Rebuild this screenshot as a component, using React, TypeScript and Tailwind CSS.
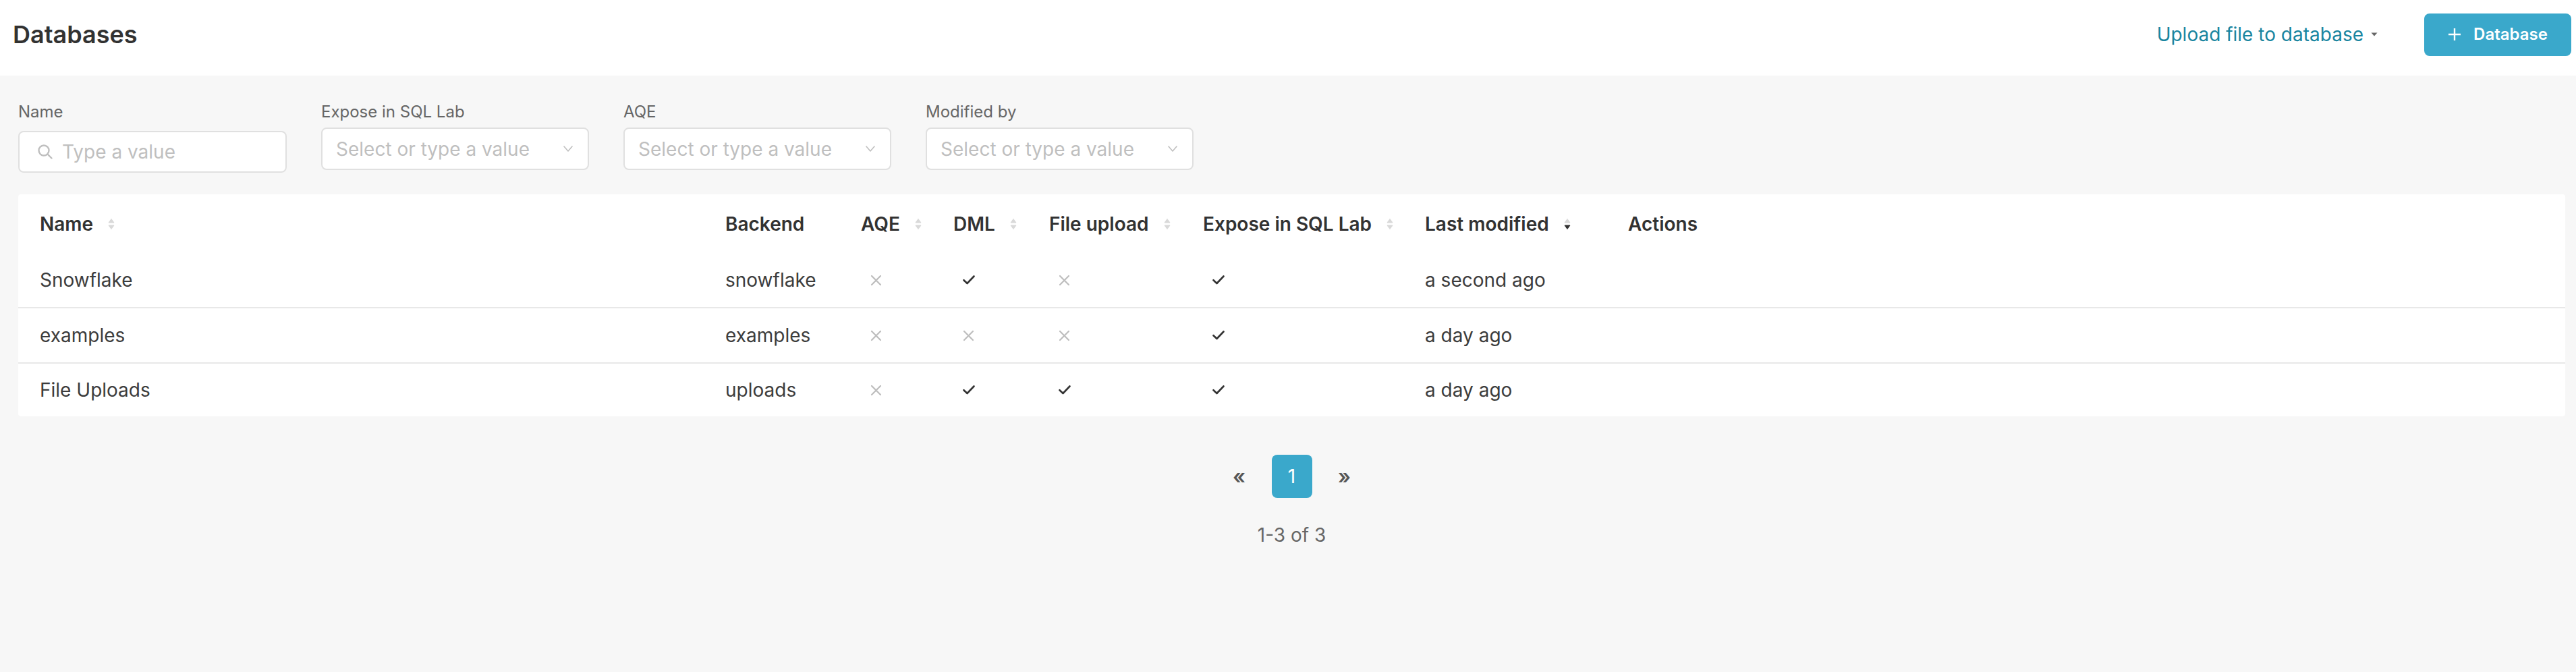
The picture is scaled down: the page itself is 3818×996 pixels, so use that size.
import React from "react";

type Flag = boolean;

interface DbRow {
  name: string;
  backend: string;
  aqe: Flag;
  dml: Flag;
  upload: Flag;
  expose: Flag;
  modified: string;
}

const rows: DbRow[] = [
  { name: "Snowflake", backend: "snowflake", aqe: false, dml: true, upload: false, expose: true, modified: "a second ago" },
  { name: "examples", backend: "examples", aqe: false, dml: false, upload: false, expose: true, modified: "a day ago" },
  { name: "File Uploads", backend: "uploads", aqe: false, dml: true, upload: true, expose: true, modified: "a day ago" }
];

const cols = "grid grid-cols-[1016px_201px_137px_142px_228px_329px_301px_1fr] items-center px-[32px]";

function SortIcon({ active }: { active?: boolean }) {
  return (
    <svg width="10" height="20" viewBox="0 0 10 20" className="ml-[22px] shrink-0">
      <path d="M5 2.5 L9 8 H1 Z" fill="#d9d9d9" strokeLinejoin="round" stroke="#d9d9d9" strokeWidth="1" />
      <path d="M1 12 H9 L5 17.5 Z" fill={active ? "#323232" : "#d9d9d9"} strokeLinejoin="round" stroke={active ? "#323232" : "#d9d9d9"} strokeWidth="1" />
    </svg>
  );
}

function FlagIcon({ on }: { on: Flag }) {
  if (on) {
    return (
      <svg width="18" height="14" viewBox="0 0 18 14" className="ml-[14px]">
        <path d="M1.5 7.2 L6.5 12 L16.5 1.5" fill="none" stroke="#323232" strokeWidth="2.6" strokeLinecap="round" strokeLinejoin="round" />
      </svg>
    );
  }
  return (
    <svg width="17" height="17" viewBox="0 0 17 17" className="ml-[14px]">
      <path d="M2 2 L15 15 M15 2 L2 15" fill="none" stroke="#bdbdbd" strokeWidth="2.2" strokeLinecap="round" />
    </svg>
  );
}

function SelectFilter({ label }: { label: string }) {
  return (
    <div className="flex flex-col w-[397px]">
      <span className="text-[24px] leading-[32px] text-[#666666]">{label}</span>
      <div className="mt-[7px] h-[63px] bg-white border-2 border-[#e0e0e0] rounded-[8px] flex items-center justify-between pl-[20px] pr-[22px]">
        <span className="text-[28px] text-[#bfbfbf]">Select or type a value</span>
        <svg width="14" height="9" viewBox="0 0 14 9">
          <path d="M1 1 L7 8 L13 1" fill="none" stroke="#bfbfbf" strokeWidth="1.6" strokeLinecap="round" strokeLinejoin="round" />
        </svg>
      </div>
    </div>
  );
}

export default function App() {
  return (
    <div className="w-[3818px] min-h-[996px] bg-[#f7f7f7] font-['Inter','Liberation_Sans',sans-serif] text-[#323232]">
      {/* Page header */}
      <header className="h-[112px] bg-white flex items-center justify-between pl-[19px] pr-[7px] pb-[10px]">
        <h1 className="text-[36px] leading-none font-semibold text-[#323232]">Databases</h1>
        <div className="flex items-center">
          <button className="flex items-center text-[28px] text-[#1985a0]">
            Upload file to database
            <svg width="10" height="6" viewBox="0 0 10 6" className="ml-[11px]">
              <path d="M0.5 0.5 H9.5 L5 5.5 Z" fill="#666666" />
            </svg>
          </button>
          <button className="ml-[69px] w-[218px] h-[63px] rounded-[8px] bg-[#3aa8cb] text-white flex items-center justify-center gap-[18px] text-[24px] font-semibold">
            <svg width="20" height="20" viewBox="0 0 20 20">
              <path d="M10 1 V19 M1 10 H19" stroke="#ffffff" strokeWidth="2.4" />
            </svg>
            Database
          </button>
        </div>
      </header>

      <main className="pl-[27px] pr-[16px]">
        {/* Filters */}
        <div className="pt-[38px] flex items-start gap-[51px]">
          <div className="flex flex-col w-[398px]">
            <span className="text-[24px] leading-[32px] text-[#666666]">Name</span>
            <div className="mt-[12px] h-[62px] bg-white border-2 border-[#e0e0e0] rounded-[8px] flex items-center pl-[26px]">
              <svg width="24" height="24" viewBox="0 0 24 24">
                <circle cx="10" cy="10" r="7.5" fill="none" stroke="#bfbfbf" strokeWidth="2.4" />
                <path d="M15.5 15.5 L21.5 21.5" stroke="#bfbfbf" strokeWidth="2.4" strokeLinecap="round" />
              </svg>
              <span className="ml-[13px] text-[28px] text-[#bfbfbf]">Type a value</span>
            </div>
          </div>
          <SelectFilter label="Expose in SQL Lab" />
          <SelectFilter label="AQE" />
          <SelectFilter label="Modified by" />
        </div>

        {/* Table */}
        <div className="mt-[32px] bg-white rounded-[4px] text-[28px]">
          <div className={`${cols} h-[87px] font-semibold text-[#323232]`}>
            <div className="flex items-center">Name<SortIcon /></div>
            <div>Backend</div>
            <div className="flex items-center">AQE<SortIcon /></div>
            <div className="flex items-center">DML<SortIcon /></div>
            <div className="flex items-center">File upload<SortIcon /></div>
            <div className="flex items-center">Expose in SQL Lab<SortIcon /></div>
            <div className="flex items-center">Last modified<SortIcon active /></div>
            <div>Actions</div>
          </div>
          {rows.map((r, i) => (
            <div
              key={r.name}
              className={`${cols} text-[#3c3c3c] ${i < rows.length - 1 ? "h-[82px] border-b-2 border-[#e8e8e8]" : "h-[78px]"}`}
            >
              <div>{r.name}</div>
              <div>{r.backend}</div>
              <div className="flex items-center"><FlagIcon on={r.aqe} /></div>
              <div className="flex items-center"><FlagIcon on={r.dml} /></div>
              <div className="flex items-center"><FlagIcon on={r.upload} /></div>
              <div className="flex items-center"><FlagIcon on={r.expose} /></div>
              <div>{r.modified}</div>
              <div />
            </div>
          ))}
        </div>

        {/* Pagination */}
        <div className="mt-[57px] flex justify-center items-center gap-[18px]">
          <span className="w-[60px] h-[64px] flex items-center justify-center text-[30px] font-semibold text-[#555555]">«</span>
          <span className="w-[60px] h-[64px] flex items-center justify-center rounded-[8px] bg-[#3aa8cb] text-white text-[28px]">1</span>
          <span className="w-[60px] h-[64px] flex items-center justify-center text-[30px] font-semibold text-[#555555]">»</span>
        </div>
        <div className="mt-[35px] text-center text-[28px] leading-[40px] text-[#666666]">1-3 of 3</div>
      </main>
    </div>
  );
}
